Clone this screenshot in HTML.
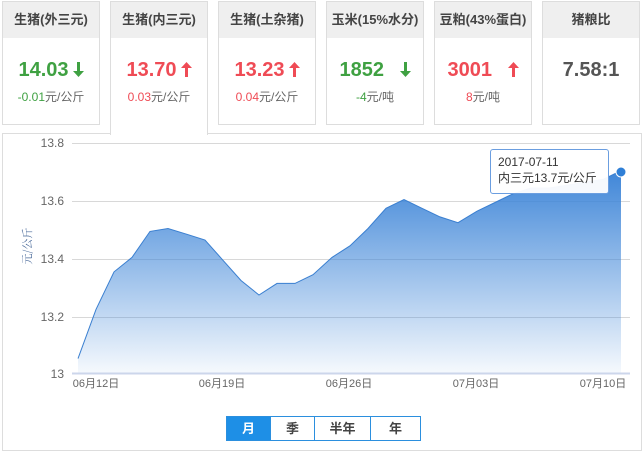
<!DOCTYPE html>
<html><head><meta charset="utf-8"><style>
*{margin:0;padding:0;box-sizing:border-box}
body{width:644px;height:453px;background:#fff;position:relative;overflow:hidden;font-family:"Liberation Sans","Noto Sans CJK SC",sans-serif}
.card{position:absolute;top:1px;width:98px;height:124px;border:1px solid #ddd;background:#fff}
.card .h{height:36px;background:#efefef;text-align:center;line-height:36px;font-size:13px;font-weight:bold;color:#444}
.card .v{text-align:center;font-size:20px;font-weight:bold;margin-top:20px;line-height:24px}
.card .v svg{vertical-align:-1px;margin-left:4px}
.card .s{text-align:center;font-size:12px;margin-top:6px;color:#666}
.g{color:#3fa142}.r{color:#ef4b55}
.active{height:134px;border-bottom:none;z-index:2}
.panel{position:absolute;left:2px;top:133px;width:640px;height:318px;border:1px solid #ddd}
.btns{position:absolute;left:226px;top:416px;display:flex;border:1px solid #2b8fde;height:25px;z-index:3}
.btns div{font-size:13px;font-weight:bold;color:#444;text-align:center;line-height:23px;border-left:1px solid #2b8fde}
.btns div:first-child{border-left:none;background:#1e8fe6;color:#fff}
.tip{position:absolute;left:490px;top:149px;width:119px;height:45px;border:1px solid #6b9ee0;border-radius:3px;background:rgba(255,255,255,.95);font-size:12px;color:#333;padding:4px 0 0 7px;line-height:16px;z-index:3}
</style></head><body>
<div class="panel"></div>
<div class="card" style="left:2px"><div class="h">生猪(外三元)</div><div class="v g">14.03<svg width="11" height="15" viewBox="0 0 11 15"><path d="M4 0h3v9h4l-5.5 6L0 9h4z" fill="#3fa142"/></svg></div><div class="s"><span class="g">-0.01</span>元/公斤</div></div>
<div class="card active" style="left:110px;border-bottom:none"><div class="h">生猪(内三元)</div><div class="v r">13.70<svg width="11" height="15" viewBox="0 0 11 15"><path d="M4 15h3V6h4L5.5 0 0 6h4z" fill="#ef4b55"/></svg></div><div class="s"><span class="r">0.03</span>元/公斤</div></div>
<div class="card" style="left:218px"><div class="h">生猪(土杂猪)</div><div class="v r">13.23<svg width="11" height="15" viewBox="0 0 11 15"><path d="M4 15h3V6h4L5.5 0 0 6h4z" fill="#ef4b55"/></svg></div><div class="s"><span class="r">0.04</span>元/公斤</div></div>
<div class="card" style="left:326px"><div class="h">玉米(15%水分)</div><div class="v g">1852 <svg width="11" height="15" viewBox="0 0 11 15" style="margin-left:10px"><path d="M4 0h3v9h4l-5.5 6L0 9h4z" fill="#3fa142"/></svg></div><div class="s"><span class="g">-4</span>元/吨</div></div>
<div class="card" style="left:434px"><div class="h">豆粕(43%蛋白)</div><div class="v r">3001 <svg width="11" height="15" viewBox="0 0 11 15" style="margin-left:10px"><path d="M4 15h3V6h4L5.5 0 0 6h4z" fill="#ef4b55"/></svg></div><div class="s"><span class="r">8</span>元/吨</div></div>
<div class="card" style="left:542px"><div class="h">猪粮比</div><div class="v" style="color:#555">7.58:1</div></div>
<svg style="position:absolute;left:0;top:0;z-index:1" width="644" height="453">
<defs><linearGradient id="gr" x1="0" y1="0" x2="0" y2="1"><stop offset="0" stop-color="#3f86d8"/><stop offset="1" stop-color="#3f86d8" stop-opacity="0.05"/></linearGradient></defs>
<g stroke="#d8d8d8" stroke-width="1"><line x1="72" y1="143.5" x2="630" y2="143.5"/><line x1="72" y1="201.5" x2="630" y2="201.5"/><line x1="72" y1="259.5" x2="630" y2="259.5"/><line x1="72" y1="317.5" x2="630" y2="317.5"/></g>
<polygon fill="url(#gr)" points="78,373 78,358.6 96,309.4 114,271.9 132,257.4 150,231.4 168,228.5 187,234.3 205,240 223,260.3 241,280.5 259,295 277,283.4 295,283.4 313,274.7 332,257.4 350,245.8 368,228.5 386,208.3 404,199.6 422,208.3 440,216.9 458,222.7 477,211.2 495,202.5 513,193.8 531,188 549,188 567,185.2 585,182.3 603,179.4 621,170.7 621,373"/>
<polyline fill="none" stroke="#3a7fd0" stroke-width="1" points="78,358.6 96,309.4 114,271.9 132,257.4 150,231.4 168,228.5 187,234.3 205,240 223,260.3 241,280.5 259,295 277,283.4 295,283.4 313,274.7 332,257.4 350,245.8 368,228.5 386,208.3 404,199.6 422,208.3 440,216.9 458,222.7 477,211.2 495,202.5 513,193.8 531,188 549,188 567,185.2 585,182.3 603,179.4 621,170.7"/>
<circle cx="621" cy="172" r="5" fill="#2f7fd6" stroke="#fff" stroke-width="1"/>
<line x1="72" y1="373.5" x2="630" y2="373.5" stroke="#ccd6eb" stroke-width="2"/>
<g fill="#666" font-size="12" text-anchor="end" font-family="Liberation Sans,sans-serif"><text x="64" y="147">13.8</text><text x="64" y="205">13.6</text><text x="64" y="263">13.4</text><text x="64" y="321">13.2</text><text x="64" y="378">13</text></g>
<g fill="#666" font-size="11" text-anchor="middle" font-family="Liberation Sans,Noto Sans CJK SC,sans-serif"><text x="96" y="387">06月12日</text><text x="222" y="387">06月19日</text><text x="349" y="387">06月26日</text><text x="476" y="387">07月03日</text><text x="603" y="387">07月10日</text></g>
<text transform="translate(31,246) rotate(-90)" fill="#4a6a9a" font-size="11" text-anchor="middle" font-family="Noto Serif CJK SC,serif">元/公斤</text>
</svg>
<div class="tip">2017-07-11<br>内三元13.7元/公斤</div>
<div class="btns"><div style="width:43px">月</div><div style="width:44px">季</div><div style="width:56px">半年</div><div style="width:50px">年</div></div>
</body></html>
